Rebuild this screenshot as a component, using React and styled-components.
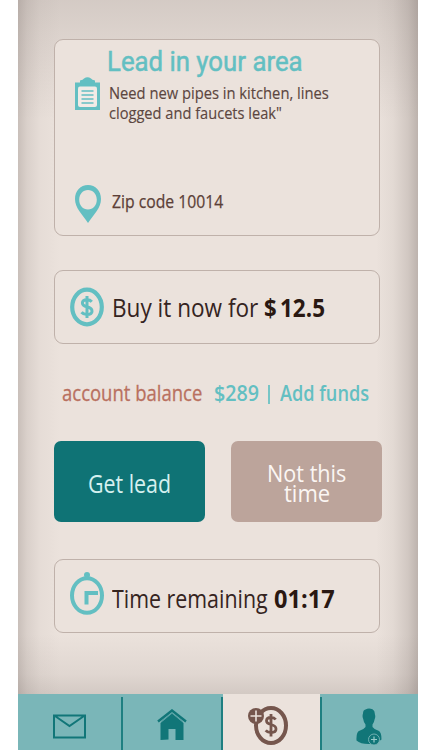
import { useLayoutEffect, useRef, useState } from "react";
import styled, { createGlobalStyle } from "styled-components";

// squeezes a single line of text to the given width
const Fit = ({ width, children, ...rest }) => {
    const ref = useRef(null);
    const [scale, setScale] = useState(1);

    useLayoutEffect(() => {
        setScale(width / ref.current.offsetWidth);
    }, [width]);

    return (
        <Line $width={width} {...rest}>
            <Squeezed ref={ref} style={{ transform: `scaleX(${scale})` }}>{children}</Squeezed>
        </Line>
    );
};

const ClipboardIcon = () => (
    <svg width="25" height="33" viewBox="0 0 25 33">
        <path d="M0 5.500H5V3.500Q8 3 9 1.500Q12.500-1 16 1.500Q17 3 20 3.500V5.500H25V33H0Z" fill="#63bfc2" />
        <rect x="3" y="9.500" width="19" height="20.500" rx="2" fill="#f1ebe6" />
        <path d="M6.500 14H18.500M6.500 18H18.500M6.500 22H18.500M6.500 26H18.500" stroke="#63bfc2" strokeWidth="1.500" />
    </svg>
);

const PinIcon = () => (
    <svg width="26" height="38" viewBox="0 0 26 38">
        <path fillRule="evenodd" fill="#63bfc2" d="M13 0C5.500 0 0 5.800 0 14C0 23 7 29 13 38C19 29 26 23 26 14C26 5.800 20.500 0 13 0ZM13 5C18 5 21.800 9 21.800 14.700S18 24.500 13 24.500S4.200 20.400 4.200 14.700S8 5 13 5Z" />
    </svg>
);

const DollarIcon = () => (
    <svg width="34" height="40" viewBox="0 0 34 40">
        <ellipse cx="17" cy="20" rx="14.800" ry="17.300" fill="none" stroke="#63bfc2" strokeWidth="4.200" />
        <path d="M21.800 14.800Q20 12.800 17 12.800Q12.400 12.800 12.400 16Q12.400 18.700 17 19.800Q22 21 22 24.200Q22 27.500 17 27.500Q13.500 27.500 11.500 25.200M17 9V31" fill="none" stroke="#63bfc2" strokeWidth="3" />
    </svg>
);

const TimerIcon = () => (
    <svg width="34" height="43" viewBox="0 0 34 43">
        <circle cx="17" cy="3" r="3" fill="#63bfc2" />
        <ellipse cx="17" cy="23.500" rx="15" ry="17.300" fill="none" stroke="#63bfc2" strokeWidth="4" />
        <path d="M16.500 32.500V21H28" fill="none" stroke="#63bfc2" strokeWidth="4" />
    </svg>
);

const MailIcon = () => (
    <svg width="33" height="25" viewBox="0 0 33 25">
        <path d="M1 1.500H32V23.500H1ZM2 2L16.500 12L31 2" fill="none" stroke="#117678" strokeWidth="2" />
    </svg>
);

const HomeIcon = () => (
    <svg width="30" height="31" viewBox="0 0 30 31">
        <path d="M3.500 14L15 4.500L26.500 14V31H18.500V20H11.500V30.500L3.500 31Z" fill="#117678" />
        <path d="M1 12.500L15 1.500L29 12.500" fill="none" stroke="#117678" strokeWidth="2.400" />
        <path d="M4 12.500L15 4.200L26 12.500" fill="none" stroke="#459799" strokeWidth="0.700" />
    </svg>
);

const CoinIcon = () => (
    <svg width="48" height="40" viewBox="0 0 48 40">
        <ellipse cx="23" cy="20.500" rx="15" ry="17.500" fill="none" stroke="#75564d" strokeWidth="4" />
        <path d="M27.700 14.500Q26.200 12.500 23 12.500Q18.500 12.500 18.500 15.800Q18.500 18.500 23 19.500Q28 20.700 28 24Q28 27.500 23 27.500Q19.500 27.500 17.700 25.300M23 9V31.500" fill="none" stroke="#75564d" strokeWidth="2.800" />
        <circle cx="8" cy="11" r="8" fill="#75564d" />
        <path d="M2.500 11H13.500M8 5.500V16.500" stroke="#ebe2dc" strokeWidth="1.600" />
    </svg>
);

const PersonIcon = () => (
    <svg width="26" height="38" viewBox="0 0 26 38">
        <path d="M7 5.500Q7 2 9.500 1.500Q12.500-.5 16.500 1.200Q19 2.500 18.800 6Q19.800 8.500 18.700 11Q18.200 14.500 16.500 16.500V19Q18.500 21.800 22.500 22.800Q25.500 24 25.500 31.500Q20 36 12.500 36Q4.500 36 .5 32.500Q0 24 3.500 22.800Q7.500 21.800 9.500 19V16.500Q7.700 14.500 7.200 11Q6 8.500 7 5.500Z" fill="#117678" />
        <circle cx="18" cy="31.500" r="5.500" fill="#117678" stroke="#7ab6b8" strokeWidth="0.900" />
        <path d="M15 31.500H21M18 28.500V34.500" stroke="#9acbcb" strokeWidth="1.200" />
    </svg>
);

const App = () => {
    return (
        <>
            <GlobalStyle />
            <Screen>
                <Body>
                    <LeadCard>
                        <Title width={196}>Lead in your area</Title>
                        <Summary>
                            <ClipboardIcon />
                            <div>
                                <Detail width={220}>Need new pipes in kitchen, lines</Detail>
                                <Detail width={173}>clogged and faucets leak"</Detail>
                            </div>
                        </Summary>
                        <Location>
                            <PinIcon />
                            <Zip width={111}>Zip code 10014</Zip>
                        </Location>
                    </LeadCard>
                    <InfoCard>
                        <DollarIcon />
                        <InfoText width={146}>Buy it now for</InfoText>
                        <Price>
                            <InfoValue width={13}>$</InfoValue>
                            <InfoValue width={45}>12.5</InfoValue>
                        </Price>
                    </InfoCard>
                    <Balance>
                        <BalanceLabel width={140}>account balance</BalanceLabel>
                        <Funds width={45}>$289</Funds>
                        <Separator />
                        <Funds width={89}>Add funds</Funds>
                    </Balance>
                    <Actions>
                        <Button $primary>
                            <ButtonText $primary width={83}>Get lead</ButtonText>
                        </Button>
                        <Button>
                            <ButtonText width={79}>Not this</ButtonText>
                            <ButtonText width={46}>time</ButtonText>
                        </Button>
                    </Actions>
                    <TimerCard>
                        <TimerIcon />
                        <InfoText width={156}>Time remaining</InfoText>
                        <InfoValue width={61}>01:17</InfoValue>
                    </TimerCard>
                </Body>
                <Nav>
                    <Tab $top={20}><MailIcon /></Tab>
                    <Tab $top={15} $line="0 3px, 100% 3px"><HomeIcon /></Tab>
                    <Tab $top={11} $active><CoinIcon /></Tab>
                    <Tab $top={14} $line="0 3px, 0 3px"><PersonIcon /></Tab>
                </Nav>
            </Screen>
        </>
    );
};

const GlobalStyle = createGlobalStyle`
    body {
        margin: 0;
        background: #fff;
    }
    svg {
        display: block;
        flex: none;
    }
`;

const Screen = styled.main`
    box-sizing: border-box;
    width: 400px;
    height: 750px;
    margin-left: 18px;
    display: flex;
    flex-direction: column;
    overflow: hidden;
    font-family: "Open Sans", "Noto Sans", sans-serif;
`;

const Body = styled.div`
    box-sizing: border-box;
    height: 694px;
    padding: 39px 36px 0;
    background:
        linear-gradient(to right, rgba(92, 80, 76, 0.24) 0, rgba(92, 80, 76, 0.12) 9px, rgba(92, 80, 76, 0.04) 22px, transparent 42px),
        linear-gradient(to left, rgba(92, 80, 76, 0.32) 0, rgba(92, 80, 76, 0.18) 10px, rgba(92, 80, 76, 0.06) 25px, transparent 42px),
        linear-gradient(to bottom, rgba(92, 80, 76, 0.16) 0, rgba(92, 80, 76, 0.11) 32px, transparent 120px),
        linear-gradient(to top, rgba(92, 80, 76, 0.17) 0, rgba(92, 80, 76, 0.08) 20px, transparent 60px),
        #ebe2dc;
`;

const Line = styled.div`
    width: ${(p) => p.$width}px;
    flex: none;
    white-space: nowrap;
`;

const Squeezed = styled.span`
    display: inline-block;
    vertical-align: top;
    transform-origin: left center;
`;

const Card = styled.section`
    box-sizing: border-box;
    width: 326px;
    border: 1px solid #bfb1aa;
    border-radius: 9px;
    background: #ebe2dc;
`;

const LeadCard = styled(Card)`
    height: 197px;
    padding: 8px 0 0 20px;
`;

const Title = styled(Fit)`
    margin-left: 32px;
    font: 400 28px/28px Roboto, sans-serif;
    -webkit-text-stroke: 0.500px #63bfc2;
    color: #63bfc2;
`;

const Summary = styled.div`
    display: flex;
    gap: 9px;
    padding-top: 1px;

    > div {
        padding-top: 6px;
    }
`;

const Detail = styled(Fit)`
    font-size: 16.400px;
    line-height: 20.300px;
    color: #5c4640;
    -webkit-text-stroke: 0.150px #5c4640;
`;

const Location = styled.div`
    display: flex;
    gap: 11px;
    margin-top: 61px;
`;

const Zip = styled(Fit)`
    font-size: 18px;
    line-height: 33px;
    color: #5c4038;
    -webkit-text-stroke: 0.250px #5c4038;
`;

const InfoCard = styled(Card)`
    height: 74px;
    display: flex;
    align-items: center;
    padding-left: 15px;
    margin-top: 34px;

    > svg {
        margin-right: 8px;
    }
`;

const TimerCard = styled(InfoCard)`
    margin-top: 0;

    > svg {
        margin-bottom: 5px;
    }

    > div {
        padding-top: 3px;
    }
`;

const InfoText = styled(Fit)`
    font-size: 25.500px;
    line-height: 34px;
    color: #35241f;
    margin-right: 6px;
`;

const InfoValue = styled(InfoText)`
    font-weight: 700;
    color: #2a1812;
    margin-right: 0;
`;

const Price = styled.div`
    display: flex;
    gap: 3px;
`;

const Balance = styled.div`
    height: 30px;
    display: flex;
    align-items: center;
    margin: 34px 0 33px;
    padding-left: 8px;
    font-size: 21px;
    line-height: 28px;
`;

const BalanceLabel = styled(Fit)`
    color: #b9705f;
    -webkit-text-stroke: 0.300px #b9705f;
    margin-right: 12px;
`;

const Funds = styled(Fit)`
    font-weight: 600;
    color: #63bfc2;
`;

const Separator = styled.span`
    width: 1.500px;
    height: 19px;
    margin: 2px 10px 0 9px;
    background: #77c5c6;
`;

const Actions = styled.div`
    display: flex;
    gap: 26px;
    width: 328px;
    margin-bottom: 37px;
`;

const Button = styled.button`
    box-sizing: border-box;
    width: 151px;
    height: 81px;
    padding: ${(p) => (p.$primary ? "3px 0 0" : "3px 0 0")};
    display: flex;
    flex-direction: column;
    align-items: center;
    justify-content: center;
    border: 0;
    border-radius: 7px;
    background: ${(p) => (p.$primary ? "#0f7375" : "#bca49b")};
    color: ${(p) => (p.$primary ? "#d5f0ef" : "#fbf6f3")};
`;

const ButtonText = styled(Fit)`
    font-family: "Open Sans", sans-serif;
    font-size: ${(p) => (p.$primary ? "25.500px" : "23px")};
    line-height: ${(p) => (p.$primary ? "30px" : "20.500px")};
    text-align: left;
`;

const Nav = styled.nav`
    height: 56px;
    display: grid;
    grid-template-columns: 103px 102px 97px 98px;
`;

const Tab = styled.a`
    display: flex;
    justify-content: center;
    align-items: flex-start;
    padding-top: ${(p) => p.$top}px;
    height: 56px;
    box-sizing: border-box;
    background-color: ${(p) => (p.$active ? "#ebe2dc" : "#7ab6b8")};
    ${(p) => p.$line && `
        background-image: linear-gradient(#1f7f81, #1f7f81), linear-gradient(#1f7f81, #1f7f81);
        background-repeat: no-repeat;
        background-size: 2px 100%;
        background-position: ${p.$line};
    `}
`;

export default App;
